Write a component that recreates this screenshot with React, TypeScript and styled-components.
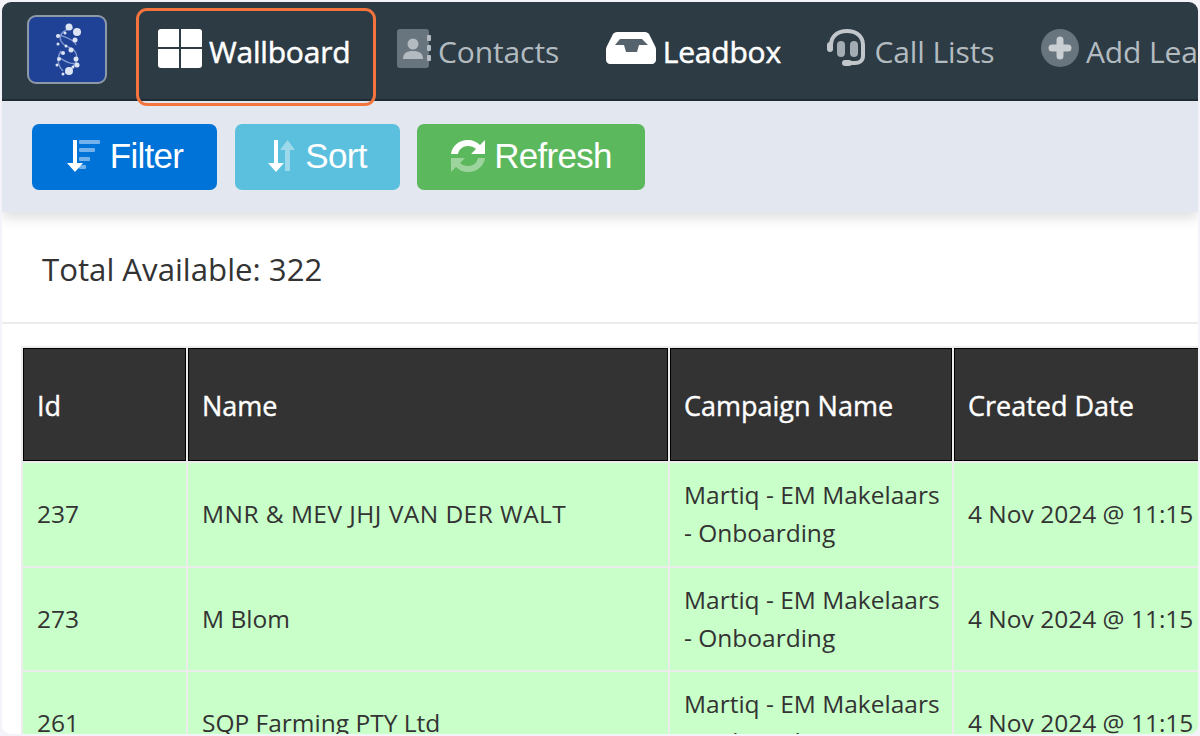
import React from "react";
import styled, { createGlobalStyle } from "styled-components";

const GlobalStyle = createGlobalStyle`
  html, body {
    margin: 0;
    padding: 0;
    background: #f3f3f9;
    overflow: hidden;
  }
`;

const Frame = styled.div`
  width: 1196px;
  height: 732px;
  margin: 2px 2px 2px;
  border-radius: 9px;
  background: #ffffff;
  overflow: hidden;
  font-family: "Open Sans", "Noto Sans", sans-serif;
`;

const NavBar = styled.nav`
  height: 99px;
  box-sizing: border-box;
  padding: 13px 0 0 25px;
  background: #2d3b45;
  border-bottom: 2px solid #1f2b33;
  display: flex;
  align-items: flex-start;
  position: relative;
  z-index: 1;
  white-space: nowrap;
`;

const Logo = styled.div`
  width: 80px;
  height: 69px;
  box-sizing: border-box;
  border: 2px solid #8d99a6;
  border-radius: 9px;
  background: #1f4196;
  display: flex;
  align-items: center;
  justify-content: center;
  margin-right: 51px;
  flex: none;
`;

const NavItems = styled.div`
  display: flex;
  align-items: center;
  gap: 46.5px;
  height: 72px;
`;

const NavItem = styled.a<{ $active?: boolean }>`
  display: flex;
  align-items: center;
  gap: 7px;
  font-size: 30px;
  letter-spacing: ${(p) => (p.$active ? "-0.2px" : "-0.1px")};
  -webkit-text-stroke: ${(p) => (p.$active ? "0.5px #ffffff" : "0")};
  color: ${(p) => (p.$active ? "#ffffff" : "#b3bbc0")};
  flex: none;

  svg {
    margin-bottom: 6px;
  }
`;

const Highlight = styled.div`
  position: absolute;
  left: 134px;
  top: 6px;
  width: 240px;
  height: 98px;
  box-sizing: border-box;
  border: 3px solid #f4743e;
  border-radius: 11px;
  pointer-events: none;
`;

const ToolBar = styled.div`
  height: 111px;
  box-sizing: border-box;
  padding: 23px 0 0 30px;
  background: #e3e8f0;
  display: flex;
  gap: 17.5px;
  align-items: flex-start;
  box-shadow: 0 6px 12px rgba(0, 0, 0, 0.13);
  position: relative;
`;

const ActionButton = styled.button<{ $bg: string; $width: number }>`
  width: ${(p) => p.$width}px;
  height: 65.5px;
  padding: 0 0 2px;
  border: none;
  border-radius: 7px;
  background: ${(p) => p.$bg};
  color: #ffffff;
  display: flex;
  align-items: center;
  justify-content: center;
  gap: 8px;
  font-family: "Liberation Sans", Arial, sans-serif;
  font-size: 35px;
  letter-spacing: -0.7px;
`;

const TotalBar = styled.div`
  height: 112px;
  box-sizing: border-box;
  padding: 35px 0 0 40px;
  border-bottom: 2px solid #ececec;
  font-size: 31.2px;
  line-height: 44px;
  color: #333333;
`;

const TableWrap = styled.div`
  padding: 22px 0 0 19px;
`;

const Table = styled.table`
  width: 1300px;
  table-layout: fixed;
  border-collapse: separate;
  border-spacing: 2px;
  background: #ececec;
  font-size: 24.5px;
  color: #333333;
`;

const HeadCell = styled.th<{ $width: number }>`
  width: ${(p) => p.$width}px;
  height: 113px;
  box-sizing: border-box;
  padding: 2px 0 0 13px;
  background: #333333;
  border: 1px solid #000000;
  color: #ffffff;
  font-weight: 400;
  -webkit-text-stroke: 0.4px #ffffff;
  font-size: 27px;
  text-align: left;
`;

const Row = styled.tr`
  height: 102.5px;
`;

const Cell = styled.td`
  box-sizing: border-box;
  padding: 13px 10px 13px 14px;
  background: #c9ffc9;
  line-height: 38px;
  vertical-align: middle;
`;

const NameCell = styled(Cell)<{ $caps?: boolean }>`
  letter-spacing: ${(p) => (p.$caps ? "0.45px" : "0")};
`;

const columns = [
  { title: "Id", width: 163 },
  { title: "Name", width: 480 },
  { title: "Campaign Name", width: 282 },
  { title: "Created Date", width: 365 },
];

const leads = [
  { id: 237, name: "MNR & MEV JHJ VAN DER WALT", caps: true },
  { id: 273, name: "M Blom" },
  { id: 261, name: "SQP Farming PTY Ltd" },
];

function HelixIcon() {
  const dots = [
    [26, 6, 3.5], [34, 11, 4], [22, 12, 1.5], [15, 15, 2], [32, 19, 2.5],
    [15, 23, 1.5], [23, 25, 1.5], [28, 29, 2.5], [20, 32, 2], [16, 38, 2],
    [33, 38, 2.5], [34, 44, 2.5], [14, 44, 1.5], [26, 50, 4], [20, 53, 1.5], [30, 46, 1.5],
  ];
  return (
    <svg width="48" height="58" viewBox="0 0 48 58">
      <path
        d="M30 7C14 10 12 22 30 28C36 34 36 44 22 52M16 14C24 16 32 20 33 24M15 36C22 40 28 44 34 42M18 30C14 36 14 44 20 50"
        fill="none"
        stroke="#7f97cf"
        strokeWidth="1.4"
      />
      {dots.map(([x, y, r], i) => (
        <circle key={i} cx={x} cy={y} r={r} fill="#dde5f5" />
      ))}
    </svg>
  );
}

function WindowsIcon() {
  return (
    <svg width="44" height="39" viewBox="0 0 44 39">
      <path d="M3 0H21V18H0V3A3 3 0 0 1 3 0Z" fill="#ffffff" />
      <path d="M23 0H41A3 3 0 0 1 44 3V18H23Z" fill="#ffffff" />
      <path d="M0 20H21V39H3A3 3 0 0 1 0 36Z" fill="#ffffff" />
      <path d="M23 20H44V36A3 3 0 0 1 41 39H23Z" fill="#ffffff" />
    </svg>
  );
}

function ContactsIcon() {
  return (
    <svg width="34" height="39" viewBox="0 0 34 39">
      <rect x="0" y="0" width="32" height="39" rx="3" fill="#68757e" />
      <circle cx="16" cy="15" r="5.5" fill="#b3bbc0" />
      <path d="M6 30C6 24 10 22 16 22S26 24 26 30Z" fill="#b3bbc0" />
      <rect x="30" y="6" width="4" height="6" rx="1" fill="#b3bbc0" />
      <rect x="30" y="16" width="4" height="6" rx="1" fill="#b3bbc0" />
      <rect x="30" y="26" width="4" height="6" rx="1" fill="#b3bbc0" />
    </svg>
  );
}

function InboxIcon() {
  return (
    <svg width="50" height="32" viewBox="0 0 50 32">
      <path
        d="M11 0H39C41 0 42 1 43 2L49 14C50 16 50 17 50 19V28C50 30 48 32 46 32H4C2 32 0 30 0 28V19C0 17 0 16 1 14L7 2C8 1 9 0 11 0Z"
        fill="#ffffff"
      />
      <path d="M14 7H36L42 13H33L31 20H20L18 13H9Z" fill="#56636c" />
    </svg>
  );
}

function HeadsetIcon() {
  return (
    <svg width="40" height="40" viewBox="0 0 40 40">
      <path
        d="M4 22V17C4 8 11 3 20 3S36 8 36 17V28C36 33 32 35 28 35H20"
        fill="none"
        stroke="#c0c6ca"
        strokeWidth="4"
      />
      <rect x="0" y="14" width="6" height="10" rx="3" fill="#c0c6ca" />
      <rect x="10" y="13" width="8" height="16" rx="4" fill="#a3acb2" />
      <rect x="23" y="13" width="8" height="16" rx="4" fill="#a3acb2" />
      <rect x="15" y="32" width="10" height="6" rx="3" fill="#c0c6ca" />
    </svg>
  );
}

function PlusIcon() {
  return (
    <svg width="38" height="38" viewBox="0 0 38 38">
      <circle cx="19" cy="19" r="19" fill="#68757e" />
      <path d="M19 11V27M11 19H27" stroke="#c9ced2" strokeWidth="7" strokeLinecap="round" />
    </svg>
  );
}

function FilterIcon() {
  return (
    <svg width="36" height="34" viewBox="0 0 36 34">
      <path d="M7 1H11V24H17L9 33L1 24H7Z" fill="#ffffff" />
      <g fill="#ffffff" opacity="0.45">
        <rect x="13" y="1" width="21" height="4" rx="1" />
        <rect x="13" y="9" width="16" height="4" rx="1" />
        <rect x="13" y="18" width="11" height="4" rx="1" />
        <rect x="13" y="26" width="7" height="4" rx="1" />
      </g>
    </svg>
  );
}

function SortIcon() {
  return (
    <svg width="30" height="34" viewBox="0 0 30 34">
      <path d="M7 1H11V24H17L9 33L1 24H7Z" fill="#ffffff" />
      <path d="M18 32V11H13L20.5 1L28 11H23V32Z" fill="#ffffff" opacity="0.4" />
    </svg>
  );
}

function RefreshIcon() {
  return (
    <svg width="36" height="34" viewBox="0 0 36 34">
      <path
        d="M1 15C2 7 9 1 18 1C23 1 27 3 30 6L35 1V15H21L26 10C24 8 21 7 18 7C13 7 9 10 8 15Z"
        fill="#ffffff"
      />
      <path
        d="M35 19C34 27 27 33 18 33C13 33 9 31 6 28L1 33V19H15L10 24C12 26 15 27 18 27C23 27 27 24 28 19Z"
        fill="#ffffff"
        opacity="0.4"
      />
    </svg>
  );
}

export default function App() {
  return (
    <>
      <GlobalStyle />
      <Frame>
        <NavBar>
          <Logo>
            <HelixIcon />
          </Logo>
          <NavItems>
            <NavItem $active>
              <WindowsIcon />
              Wallboard
            </NavItem>
            <NavItem>
              <ContactsIcon />
              Contacts
            </NavItem>
            <NavItem $active>
              <InboxIcon />
              Leadbox
            </NavItem>
            <NavItem>
              <HeadsetIcon />
              Call Lists
            </NavItem>
            <NavItem>
              <PlusIcon />
              Add Leads
            </NavItem>
          </NavItems>
          <Highlight />
        </NavBar>
        <ToolBar>
          <ActionButton $bg="#0073d9" $width={185}>
            <FilterIcon />
            Filter
          </ActionButton>
          <ActionButton $bg="#5bc0de" $width={165}>
            <SortIcon />
            Sort
          </ActionButton>
          <ActionButton $bg="#5cb85c" $width={228}>
            <RefreshIcon />
            Refresh
          </ActionButton>
        </ToolBar>
        <TotalBar>Total Available: 322</TotalBar>
        <TableWrap>
          <Table>
            <thead>
              <tr>
                {columns.map((c) => (
                  <HeadCell key={c.title} $width={c.width}>
                    {c.title}
                  </HeadCell>
                ))}
              </tr>
            </thead>
            <tbody>
              {leads.map((lead) => (
                <Row key={lead.id}>
                  <Cell>{lead.id}</Cell>
                  <NameCell $caps={lead.caps}>{lead.name}</NameCell>
                  <Cell>Martiq - EM Makelaars - Onboarding</Cell>
                  <Cell>4 Nov 2024 @ 11:15</Cell>
                </Row>
              ))}
            </tbody>
          </Table>
        </TableWrap>
      </Frame>
    </>
  );
}
